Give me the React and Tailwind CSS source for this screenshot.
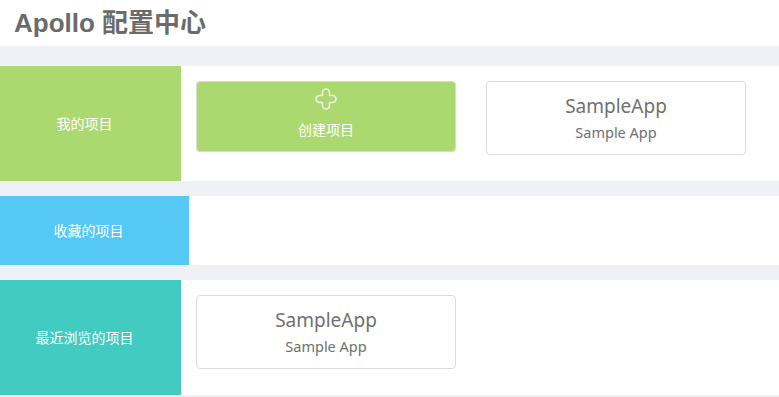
import React from "react";

const font = { fontFamily: '"Noto Sans", "Noto Sans CJK SC", sans-serif' };

function AppCard({ title, sub }) {
  return (
    <div className="w-[260px] h-[74px] rounded border border-[#dcdcdc] bg-white flex flex-col items-center justify-center text-[#707070]">
      <div className="text-[19px] leading-[22px]">{title}</div>
      <div className="text-[14.5px] leading-[18px] mt-[6px]">{sub}</div>
    </div>
  );
}

function Plus() {
  return (
    <svg width="24" height="24" viewBox="0 0 24 24">
      <path
        d="M8.5 5.5 a3.5 3.5 0 0 1 7 0 V8.5 H18.5 a3.5 3.5 0 0 1 0 7 H15.5 V18.5 a3.5 3.5 0 0 1 -7 0 V15.5 H5.5 a3.5 3.5 0 0 1 0 -7 H8.5 Z"
        fill="none"
        stroke="#eef4e4"
        strokeWidth="1.5"
        strokeLinejoin="round"
      />
    </svg>
  );
}

export default function App() {
  return (
    <div className="w-[779px] h-[397px] bg-[#f0f1f6] overflow-hidden" style={font}>
      <div className="h-[46px] bg-white flex items-center pl-[14px]">
        <h1 className="text-[26px] font-bold text-[#6b6b6b] leading-none" style={{ fontFamily: '"Liberation Sans", "Noto Sans CJK SC", sans-serif' }}>
          Apollo 配置中心
        </h1>
      </div>

      <div className="mt-[20px] h-[115px] flex bg-white">
        <div className="w-[181px] pr-[12px] bg-[#acd96f] flex items-center justify-center text-white text-[14px]">我的项目</div>
        <div className="flex gap-[30px] pl-[15px] pt-[15px]">
          <div className="w-[260px] h-[71px] rounded border border-[#d6dccd] bg-[#acd96f] flex flex-col items-center text-white text-[14px]">
            <div className="mt-[5px]"><Plus /></div>
            <div className="mt-[10px] leading-[18px]">创建项目</div>
          </div>
          <AppCard title="SampleApp" sub="Sample App" />
        </div>
      </div>

      <div className="mt-[15px] h-[69px] flex bg-white">
        <div className="w-[189px] pr-[12px] bg-[#56c8f5] flex items-center justify-center text-white text-[14px]">收藏的项目</div>
      </div>

      <div className="mt-[15px] h-[115px] flex bg-white">
        <div className="w-[181px] pr-[12px] bg-[#42cbc0] flex items-center justify-center text-white text-[14px]">最近浏览的项目</div>
        <div className="pl-[15px] pt-[15px]">
          <AppCard title="SampleApp" sub="Sample App" />
        </div>
      </div>
    </div>
  );
}
